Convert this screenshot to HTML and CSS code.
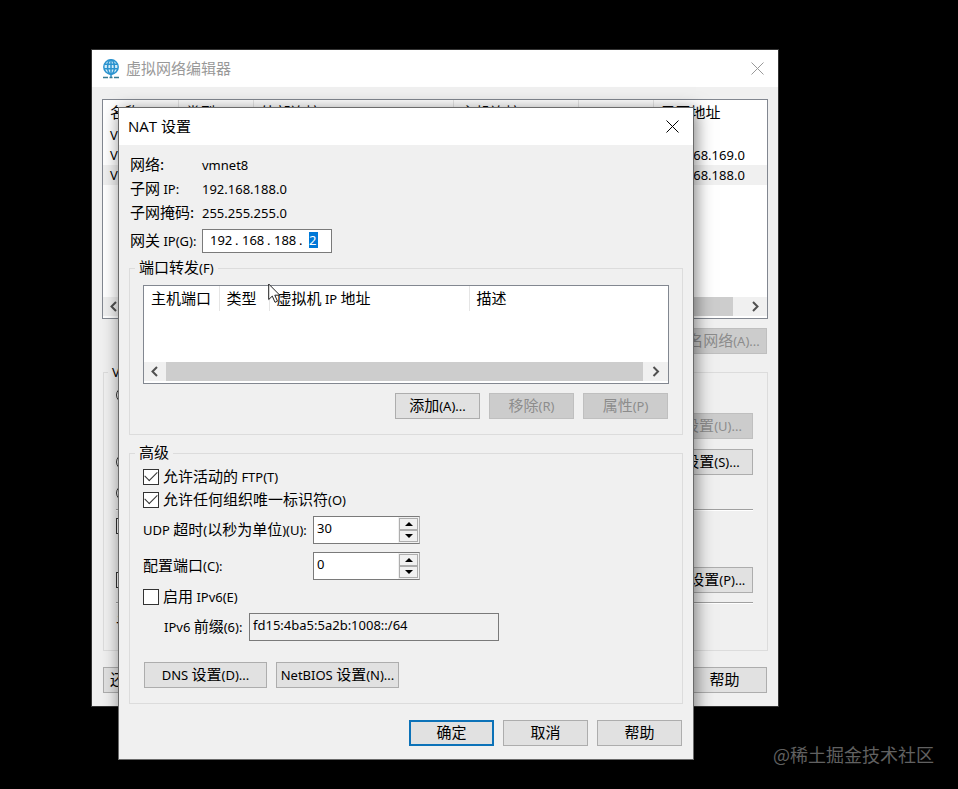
FILE: index.html
```html
<!doctype html>
<html lang="zh-CN">
<head>
    <meta charset="utf-8">
    <title>虚拟网络编辑器</title>
    <link rel="stylesheet" href="styles.css">
</head>

<body>

    <!-- 主窗口 -->
    <div class="window editor">
        <div class="titlebar inactive">
            <svg class="logo" width="20" height="20" viewBox="0 0 20 20" fill="none" stroke="#2b93cf" stroke-width="1.5">
                <circle cx="10" cy="8" r="7.2" fill="#d3ecf8"/>
                <ellipse cx="10" cy="8" rx="3.4" ry="7.2"/>
                <path d="M3.5 5.2h13M3 9.8h14M10 1v17"/>
                <path d="M2 18.4h5M8.5 18.4h3M13 18.4h5" stroke="#377b93"/>
            </svg>
            <h1>虚拟网络编辑器</h1>
            <button class="close" aria-label="关闭"><svg width="13" height="13" viewBox="0 0 13 13" fill="none" stroke="currentColor"><path d="M.5.5l12 12M12.5.5l-12 12"/></svg></button>
        </div>
        <div class="content">
            <div class="list networks">
                <table>
                    <colgroup><col class="w75"><col class="w75"><col class="w200"><col class="w125"><col class="w75"><col></colgroup>
                    <thead>
                        <tr><th>名称</th><th>类型</th><th>外部连接</th><th>主机连接</th><th></th><th>子网地址</th></tr>
                    </thead>
                    <tbody class="en">
                        <tr><td>VMnet0</td><td></td><td></td><td></td><td></td><td></td></tr>
                        <tr><td>VMnet1</td><td></td><td></td><td></td><td></td><td>192.168.169.0</td></tr>
                        <tr class="selected"><td>VMnet8</td><td></td><td></td><td></td><td></td><td>192.168.188.0</td></tr>
                    </tbody>
                </table>
                <div class="scrollbar">
                    <svg width="22" height="19" viewBox="0 0 22 19"><path d="M13 5l-4.500 4.500 4.500 4.500"/></svg>
                    <div class="thumb short"></div>
                    <svg width="22" height="19" viewBox="0 0 22 19"><path d="M8 5l4.500 4.500-4.500 4.500"/></svg>
                </div>
            </div>
            <div class="buttons end">
                <button class="btn wide" disabled>重命名网络<span class="en">(A)...</span></button>
            </div>
            <fieldset class="info">
                <legend><span class="en">VMnet</span></legend>
                <div class="line"><input type="radio" name="mode" aria-label="桥接模式"></div>
                <div class="line gap-s"><span></span><button class="btn setting" disabled>自动设置<span class="en">(U)...</span></button></div>
                <div class="line gap-n"><input type="radio" name="mode" aria-label="NAT 模式"><button class="btn setting"><span class="en">NAT</span> 设置<span class="en">(S)...</span></button></div>
                <div class="line gap-s"><input type="radio" name="mode" aria-label="仅主机模式"></div>
                <hr>
                <div class="line gap-s"><input type="checkbox" aria-label="连接主机"></div>
                <div class="line gap-l"><input type="checkbox" aria-label="使用 DHCP"><button class="btn setting"><span class="en">DHCP</span> 设置<span class="en">(P)...</span></button></div>
                <hr class="low">
                <div class="line gap-s">子网</div>
            </fieldset>
            <div class="buttons between">
                <button class="btn restore">还原默认设置</button>
                <button class="btn">帮助</button>
            </div>
        </div>
    </div>

    <!-- NAT 设置 -->
    <div class="window nat">
        <div class="titlebar">
            <h2>NAT 设置</h2>
            <button class="close" aria-label="关闭"><svg width="13" height="13" viewBox="0 0 13 13" fill="none" stroke="currentColor"><path d="M.5.5l12 12M12.5.5l-12 12"/></svg></button>
        </div>
        <div class="content">
            <dl class="summary">
                <dt>网络:</dt><dd class="en">vmnet8</dd>
                <dt>子网 <span class="en">IP:</span></dt><dd class="en">192.168.188.0</dd>
                <dt>子网掩码:</dt><dd class="en">255.255.255.0</dd>
            </dl>
            <div class="gateway">
                <label for="ip4">网关 <span class="en">IP(G):</span></label>
                <div class="ip en">
                    <input aria-label="1" value="192"><span>.</span>
                    <input aria-label="2" value="168"><span>.</span>
                    <input aria-label="3" value="188"><span>.</span>
                    <input id="ip4" class="picked" value="2">
                </div>
            </div>

            <fieldset class="forward">
                <legend>端口转发<span class="en">(F)</span></legend>
                <div class="list ports">
                    <table>
                        <colgroup><col class="w75"><col class="w50"><col class="w200"><col></colgroup>
                        <thead>
                            <tr><th>主机端口</th><th>类型</th><th>虚拟机 <span class="en">IP</span> 地址</th><th>描述</th></tr>
                        </thead>
                    </table>
                    <div class="scrollbar">
                        <svg width="22" height="19" viewBox="0 0 22 19"><path d="M13 5l-4.500 4.500 4.500 4.500"/></svg>
                        <div class="thumb"></div>
                        <svg width="25" height="19" viewBox="0 0 25 19"><path d="M10.500 5l4.500 4.500-4.500 4.500"/></svg>
                    </div>
                </div>
                <div class="buttons end">
                    <button class="btn">添加<span class="en">(A)...</span></button>
                    <button class="btn" disabled>移除<span class="en">(R)</span></button>
                    <button class="btn" disabled>属性<span class="en">(P)</span></button>
                </div>
            </fieldset>

            <fieldset class="advanced">
                <legend>高级</legend>
                <div class="check"><input type="checkbox" id="ftp" checked><label for="ftp">允许活动的 <span class="en">FTP(T)</span></label></div>
                <div class="check"><input type="checkbox" id="oui" checked><label for="oui">允许任何组织唯一标识符<span class="en">(O)</span></label></div>
                <div class="field gap-s">
                    <label for="udp"><span class="en">UDP</span> 超时<span class="en">(</span>以秒为单位<span class="en">)(U):</span></label>
                    <div class="spinner">
                        <input id="udp" class="en" value="30">
                        <div class="arrows"><button class="up" aria-label="增加"></button><button class="down" aria-label="减少"></button></div>
                    </div>
                </div>
                <div class="field gap-m">
                    <label for="port">配置端口<span class="en">(C):</span></label>
                    <div class="spinner">
                        <input id="port" class="en" value="0">
                        <div class="arrows"><button class="up" aria-label="增加"></button><button class="down" aria-label="减少"></button></div>
                    </div>
                </div>
                <div class="check gap-s"><input type="checkbox" id="ipv6"><label for="ipv6">启用 <span class="en">IPv6(E)</span></label></div>
                <div class="prefix gap-s">
                    <label for="prefix"><span class="en">IPv6</span> 前缀<span class="en">(6):</span></label>
                    <input id="prefix" class="en" value="fd15:4ba5:5a2b:1008::/64" readonly>
                </div>
                <div class="buttons tools">
                    <button class="btn wide"><span class="en">DNS</span> 设置<span class="en">(D)...</span></button>
                    <button class="btn wide"><span class="en">NetBIOS</span> 设置<span class="en">(N)...</span></button>
                </div>
            </fieldset>

            <div class="buttons end footer">
                <button class="btn default">确定</button>
                <button class="btn">取消</button>
                <button class="btn">帮助</button>
            </div>
        </div>
    </div>

    <svg class="pointer" width="14" height="21" viewBox="0 0 14 21"><path d="M.7 1v15.500l3.600-3.400 2.700 6.200 2.500-1.100-2.700-6h5z" fill="#fff" stroke="#222"/></svg>
    <div class="watermark">@稀土掘金技术社区</div>

</body>
</html>
```
FILE: styles.css
```css
* {
    box-sizing: border-box;
}
body {
    margin: 0;
    min-height: 100vh;
    position: relative;
    overflow: hidden;
    background: #000;
    color: #000;
    font: 15px/20px "Noto Sans CJK SC", sans-serif;
}
button, input {
    font: inherit;
    color: inherit;
    margin: 0;
}
/* 西文比中文小一号 */
.en, input.en {
    font-family: "Noto Sans", "Noto Sans CJK SC", sans-serif;
    font-size: 13px;
}
span.en {
    line-height: 1;
}

/* 窗口 */
.window {
    position: absolute;
    border: 1px solid #6b6b6b;
    background: #f0f0f0;
    white-space: nowrap;
}
.editor {
    left: 91px;
    right: 179px;
    top: 49px;
    border-color: #333;
}
.nat {
    left: 118px;
    right: 264px;
    top: 107px;
    box-shadow: 2px 3px 16px rgba(0,0,0,.5);
}
.titlebar {
    display: flex;
    align-items: center;
    height: 37px;
    padding: 0 14px 0 9px;
    background: #fff;
}
.titlebar h1, .titlebar h2 {
    flex: 1;
    margin: 0;
    padding-bottom: 2px;
    font: 15px/20px "Open Sans", "Noto Sans CJK SC", sans-serif;
}
.logo {
    margin-right: 5px;
}
.inactive {
    color: #999;
}
.close {
    display: flex;
    padding: 0;
    border: 0;
    background: none;
}
.content {
    padding: 7px 10px 13px;
}
.editor .content {
    padding-top: 12px;
}

/* 列表 */
.list {
    display: flex;
    flex-direction: column;
    justify-content: space-between;
    border: 1px solid #828790;
    background: #fff;
    padding-bottom: 2px;
}
.networks {
    height: 220px;
}
.ports {
    height: 99px;
}
.list table {
    width: 100%;
    table-layout: fixed;
    border-collapse: collapse;
}
.list th, .list td {
    height: 20px;
    padding: 0 0 0 7px;
    text-align: left;
    font-weight: normal;
    overflow: hidden;
}
.list th {
    height: 25px;
    padding-bottom: 2px;
    border-right: 1px solid #e5e5e5;
}
.list th:last-child {
    border-right: 0;
}
.selected {
    background: #f0f0f0;
}
.w50 { width: 50px; }
.w75 { width: 75px; }
.w125 { width: 125px; }
.w200 { width: 200px; }
.scrollbar {
    display: flex;
    height: 19px;
    background: #f0f0f0;
}
.scrollbar path {
    fill: none;
    stroke: #505050;
    stroke-width: 2;
}
.thumb {
    flex: 1;
    background: #cdcdcd;
}
.short {
    margin-right: 12px;
}

/* 按钮 */
.buttons {
    display: flex;
    gap: 9px;
    margin-top: 9px;
    padding: 0 1px;
}
.end {
    justify-content: flex-end;
}
.between {
    justify-content: space-between;
    margin-top: 16px;
}
.tools {
    margin-top: 21px;
}
.footer {
    margin-top: 16px;
}
.btn {
    width: 85px;
    height: 26px;
    padding: 0 0 2px;
    border: 1px solid #adadad;
    background: #e1e1e1;
    white-space: nowrap;
    line-height: 20px;
}
.btn:disabled {
    border-color: #bfbfbf;
    background: #ccc;
    color: #8c8c8c;
}
.btn.default {
    border: 2px solid #0c72b8;
}
.btn.wide {
    width: 123px;
}
.editor .btn.wide {
    width: 116px;
}
.btn.setting {
    width: 110px;
}
.btn.restore {
    width: 104px;
}

/* 分组 */
fieldset {
    min-width: 0;
    margin: 8px 0 0;
    padding: 0 13px 15px;
    border: 1px solid #dcdcdc;
}
legend {
    height: 20px;
    margin-left: -8px;
    padding: 0 4px;
    line-height: 18px;
}
.forward {
    margin-top: 5px;
}
.ports {
    margin-top: 7px;
}
.advanced {
    padding-top: 2px;
}
.info {
    margin-left: 1px;
    padding: 0 14px 15px 12px;
}
.line {
    display: flex;
    align-items: center;
    justify-content: space-between;
    height: 26px;
}
.gap-s { margin-top: 5px; }
.gap-m { margin-top: 8px; }
.gap-n { margin-top: 10px; }
.gap-l { margin-top: 28px; }
hr {
    height: 2px;
    margin: 3px 0 0;
    border: 0;
    border-top: 1px solid #a0a0a0;
    border-bottom: 1px solid #fff;
}
hr + .gap-s {
    margin-top: 2px;
}
hr.low {
    margin-top: 9px;
}
.low + .gap-s {
    margin-top: 5px;
}

/* 单选、复选框 */
input[type=checkbox], input[type=radio] {
    flex: none;
    appearance: none;
    width: 16px;
    height: 16px;
    border: 1px solid #333;
    background: #fff;
}
input[type=radio] {
    border-radius: 50%;
}
input[type=checkbox]:checked {
    display: grid;
    place-items: center;
}
input[type=checkbox]:checked::before {
    content: "";
    width: 11px;
    height: 6px;
    border: solid #333;
    border-width: 0 0 1px 1px;
    transform: translateY(-2px) rotate(-45deg);
}
.check {
    display: flex;
    align-items: center;
    gap: 4px;
    height: 23px;
}
.check label, .field label, .prefix label, .gateway label {
    padding-bottom: 2px;
}

/* 网络信息 */
.summary {
    display: grid;
    grid-template-columns: 72px 1fr;
    grid-auto-rows: 24px;
    margin: 0 1px;
    line-height: 24px;
}
.summary dd {
    margin: 0;
    line-height: 26px;
}
.gateway {
    display: grid;
    grid-template-columns: 72px 130px;
    align-items: center;
    margin: 5px 1px 0;
}
.ip {
    display: flex;
    align-items: center;
    height: 24px;
    padding: 0 0 2px 7px;
    border: 1px solid #7a7a7a;
    background: #fff;
}
.ip input {
    width: 25px;
    height: 16px;
    padding: 0;
    border: 0;
    background: none;
}
.ip span {
    width: 7px;
}
.ip .picked {
    width: 9px;
    margin-left: 3px;
    background: #0078d7;
    color: #fff;
}

/* 高级 */
.field {
    display: grid;
    grid-template-columns: 170px 107px;
    align-items: center;
}
.spinner {
    display: flex;
    height: 28px;
    border: 1px solid #7a7a7a;
    border-right-color: #adadad;
    background: #fff;
}
.spinner input {
    flex: 1;
    min-width: 0;
    height: 22px;
    padding: 0 3px;
    border: 0;
    background: none;
}
.arrows {
    display: flex;
    flex-direction: column;
    width: 21px;
    padding: 1px;
    background: #f0f0f0;
}
.arrows button {
    flex: 1;
    display: grid;
    place-items: center;
    padding: 0;
    border: 1px solid #adadad;
    background: #f0f0f0;
}
.arrows button::before {
    content: "";
    border: 4px solid transparent;
}
.up::before {
    border-top-width: 0 !important;
    border-bottom-color: #000 !important;
}
.down::before {
    border-bottom-width: 0 !important;
    border-top-color: #000 !important;
}
.prefix {
    display: grid;
    grid-template-columns: 85px 250px;
    align-items: center;
    padding-left: 21px;
}
.prefix input {
    height: 28px;
    padding: 0 3px 4px;
    border: 1px solid #7a7a7a;
    background: #f0f0f0;
}

.pointer {
    position: absolute;
    left: 268px;
    top: 283px;
}
.watermark {
    position: absolute;
    right: 24px;
    bottom: 23px;
    color: #616161;
    font-size: 18px;
    line-height: 24px;
}
```
